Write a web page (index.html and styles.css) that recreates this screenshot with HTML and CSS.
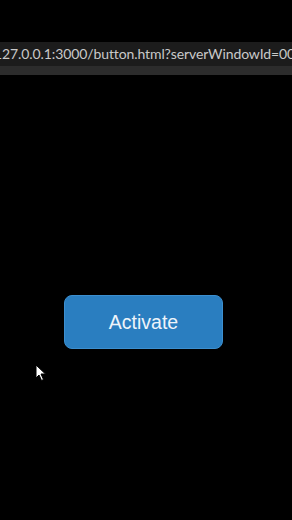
FILE: index.html
```html
<!DOCTYPE html>
<html lang="en">

<head>
  <meta charset="UTF-8">
  <meta name="viewport" content="width=device-width, initial-scale=1.0">
  <title>button</title>
  <link rel="stylesheet" href="styles.css">
</head>

<body>
  <div class="urlbar">
    <span class="url">127.0.0.1:3000/button.html?serverWindowId=00</span>
  </div>
  <div class="urlbar-edge"></div>
  <main class="stage">
    <button class="activate">Activate</button>
  </main>
  <svg class="cursor" width="12" height="18" viewBox="0 0 12 18">
    <path d="M1 1 L1 14 L4 11 L6.5 16.5 L8.5 15.5 L6 10 L10.5 10 Z" fill="#fff" stroke="#000" stroke-width="1" />
  </svg>
</body>

</html>
```

FILE: styles.css
```css
html, body {
  margin: 0;
  height: 100%;
  background: #000;
  overflow: hidden;
}

body {
  position: relative;
  font-family: "Open Sans", "DejaVu Sans", sans-serif;
}

.urlbar {
  margin-top: 42px;
  height: 24px;
  background: #1c1c1c;
  overflow: hidden;
  white-space: nowrap;
}

.url {
  display: block;
  margin-left: -6px;
  color: #c9c9c9;
  font-family: Lato, "Open Sans", sans-serif;
  font-size: 14px;
  line-height: 24px;
  letter-spacing: -0.1px;
}

.urlbar-edge {
  height: 9px;
  background: #2c2c2c;
}

.stage {
  display: flex;
  justify-content: center;
  padding-top: 220px;
  padding-right: 5px;
}

.activate {
  width: 159px;
  height: 54px;
  border: 1px solid #3c8fcf;
  border-radius: 8px;
  background: #2a7ec0;
  color: #eef4fa;
  font-family: "Liberation Sans", Arial, sans-serif;
  font-size: 19.5px;
}

.cursor {
  position: absolute;
  left: 35px;
  top: 364px;
}
```
